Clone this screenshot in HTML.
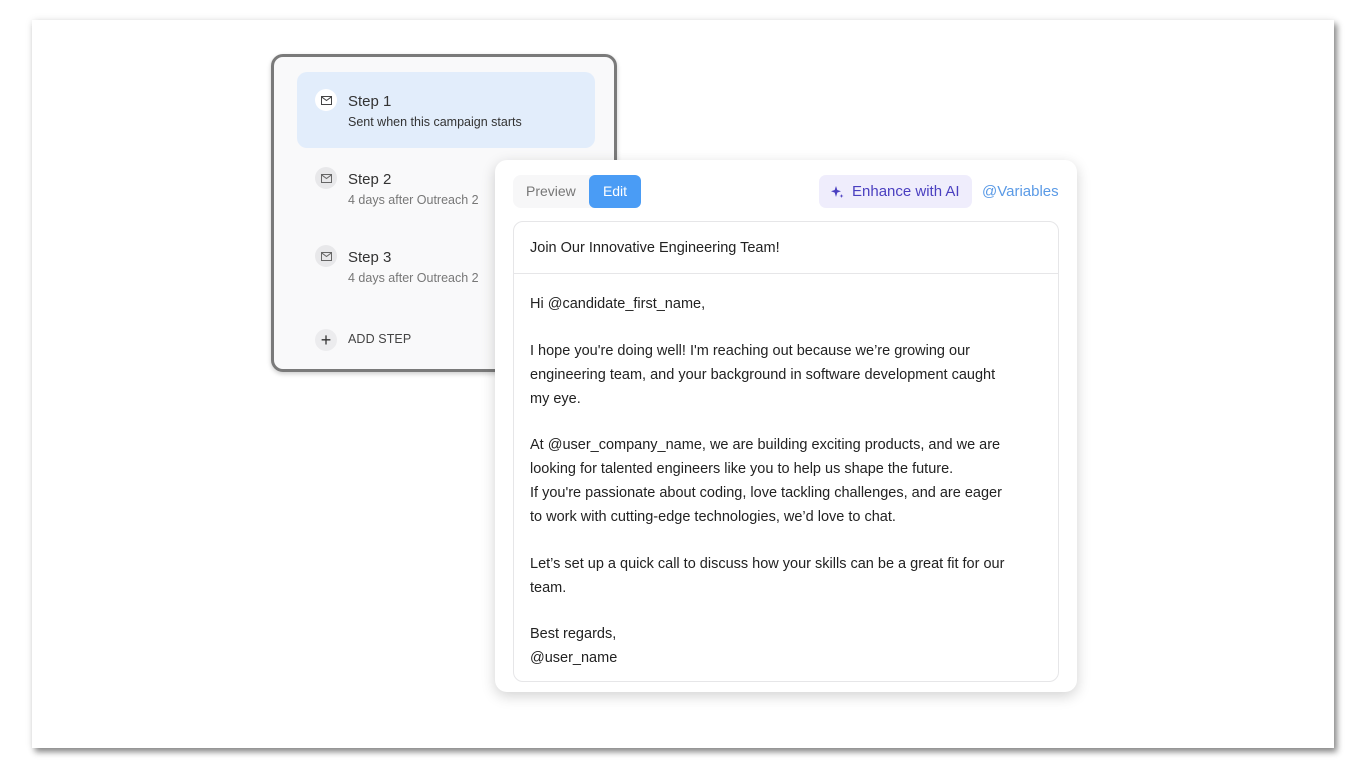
<!DOCTYPE html>
<html><head><style>
*{box-sizing:border-box;margin:0;padding:0}
body{width:1366px;height:768px;background:#fff;font-family:"Liberation Sans",Arial,sans-serif;position:relative;overflow:hidden}
.frame{position:absolute;left:32px;top:20px;width:1302px;height:728px;background:#fff;box-shadow:3px 4px 6px rgba(0,0,0,.45),0 0 8px rgba(0,0,0,.08)}
.left{position:absolute;left:271px;top:54px;width:346px;height:318px;border:3px solid #7a7a7a;border-radius:12px;background:#f9f9fa;box-shadow:0 2px 5px rgba(0,0,0,.2)}
.step{position:absolute;left:23px;width:298px;height:76px}
.step.act{background:#e2edfb;border-radius:10px}
.ic{position:absolute;left:18px;top:17px;width:22px;height:22px;border-radius:50%;background:#e8e8ea;display:flex;align-items:center;justify-content:center}
.act .ic{background:#fff}
.t1{position:absolute;left:51px;top:21px;font-size:15px;color:#333}
.t2{position:absolute;left:51px;top:43px;font-size:12.5px;color:#777}
.act .t2{color:#333}
.card{position:absolute;left:495px;top:160px;width:582px;height:532px;background:#fff;border-radius:12px;box-shadow:0 4px 14px rgba(0,0,0,.18)}
.tabs{position:absolute;left:18px;top:15px;width:128px;height:33px;background:#f7f7f8;border-radius:8px}
.prev{position:absolute;left:13px;top:8px;font-size:14px;color:#777}
.edit{position:absolute;left:76px;top:0;width:52px;height:33px;background:#4a9cf5;border-radius:6px;color:#fff;font-size:14px;text-align:center;line-height:33px}
.ai{position:absolute;left:324px;top:15px;width:153px;height:33px;background:#efedfc;border-radius:7px;color:#4a3fc0;font-size:15px;line-height:33px;padding-left:33px}
.vars{position:absolute;left:487px;top:23px;color:#5a9ae6;font-size:15px}
.box{position:absolute;left:18px;top:61px;width:546px;height:461px;border:1px solid #e6e6e8;border-radius:10px}
.subj{height:52px;border-bottom:1px solid #e6e6e8;padding:18px 0 0 16px;font-size:14.5px;color:#222}
.bodyt{padding:18px 16px 0 16px;font-size:14.5px;line-height:24px;color:#222}
.bodyt p{margin-bottom:22.5px}
</style></head><body>
<div class="frame"></div>
<div class="left">
 <div class="step act" style="top:15px"><div class="ic"><svg width="11" height="9" viewBox="0 0 11 9"><rect x=".5" y=".5" width="10" height="8" fill="none" stroke="#444"/><path d="M.5 .8 5.5 4.5 10.5 .8" fill="none" stroke="#444"/></svg></div><div class="t1">Step 1</div><div class="t2">Sent when this campaign starts</div></div>
 <div class="step" style="top:93px"><div class="ic"><svg width="11" height="9" viewBox="0 0 11 9"><rect x=".5" y=".5" width="10" height="8" fill="none" stroke="#666"/><path d="M.5 .8 5.5 4.5 10.5 .8" fill="none" stroke="#666"/></svg></div><div class="t1">Step 2</div><div class="t2">4 days after Outreach 2</div></div>
 <div class="step" style="top:171px"><div class="ic"><svg width="11" height="9" viewBox="0 0 11 9"><rect x=".5" y=".5" width="10" height="8" fill="none" stroke="#666"/><path d="M.5 .8 5.5 4.5 10.5 .8" fill="none" stroke="#666"/></svg></div><div class="t1">Step 3</div><div class="t2">4 days after Outreach 2</div></div>
 <div style="position:absolute;left:41px;top:272px;width:22px;height:22px;border-radius:50%;background:#ececee;text-align:center;line-height:22px;font-size:18px;color:#333">+</div>
 <div style="position:absolute;left:74px;top:275px;font-size:12.5px;color:#444;letter-spacing:.1px">ADD STEP</div>
</div>
<div class="card">
 <div class="tabs"><div class="prev">Preview</div><div class="edit">Edit</div></div>
 <div class="ai"><svg style="position:absolute;left:11px;top:10px" width="14" height="14" viewBox="0 0 14 14"><path d="M6 1 7.3 5 11 6.3 7.3 7.6 6 12 4.7 7.6 1 6.3 4.7 5Z" fill="#4a3fc0"/><path d="M11.5 9 12 10.5 13.5 11 12 11.5 11.5 13 11 11.5 9.5 11 11 10.5Z" fill="#4a3fc0"/></svg>Enhance with AI</div>
 <div class="vars">@Variables</div>
 <div class="box">
  <div class="subj">Join Our Innovative Engineering Team!</div>
  <div class="bodyt">
   <p>Hi @candidate_first_name,</p>
   <p>I hope you're doing well! I'm reaching out because we’re growing our<br>engineering team, and your background in software development caught<br>my eye.</p>
   <p>At @user_company_name, we are building exciting products, and we are<br>looking for talented engineers like you to help us shape the future.<br>If you're passionate about coding, love tackling challenges, and are eager<br>to work with cutting-edge technologies, we’d love to chat.</p>
   <p>Let’s set up a quick call to discuss how your skills can be a great fit for our<br>team.</p>
   <p>Best regards,<br>@user_name</p>
  </div>
 </div>
</div>
</body></html>
